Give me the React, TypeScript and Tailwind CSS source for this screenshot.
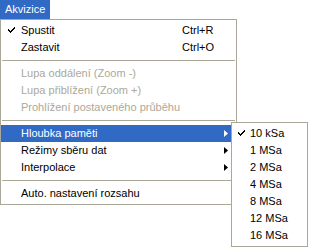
import React from 'react';

const BORDER = 'border-[#aca899]';

const Check = ({ color = '#000' }: { color?: string }) => (
  <svg width="7" height="7" viewBox="0 0 7 7" className="block">
    <path d="M0 2h1v1h1v1h1V3h1V2h1V1h1V0h1v2H6v1H5v1H4v1H3v1H2V5H1V4H0z" fill={color} />
  </svg>
);

const Arrow = ({ color = '#000' }: { color?: string }) => (
  <svg width="4" height="7" viewBox="0 0 4 7" className="block">
    <path d="M0 0L4 3.5L0 7z" fill={color} />
  </svg>
);

type Item =
  | { sep: true }
  | { sep?: false; label: string; shortcut?: string; checked?: boolean; disabled?: boolean; sub?: boolean; active?: boolean };

const mainItems: Item[] = [
  { label: 'Spustit', shortcut: 'Ctrl+R', checked: true },
  { label: 'Zastavit', shortcut: 'Ctrl+O' },
  { sep: true },
  { label: 'Lupa oddálení (Zoom -)', disabled: true },
  { label: 'Lupa přiblížení (Zoom +)', disabled: true },
  { label: 'Prohlížení postaveného průběhu', disabled: true },
  { sep: true },
  { label: 'Hloubka paměti', sub: true, active: true },
  { label: 'Režimy sběru dat', sub: true },
  { label: 'Interpolace', sub: true },
  { sep: true },
  { label: 'Auto. nastavení rozsahu' },
];

const depths = ['10 kSa', '1 MSa', '2 MSa', '4 MSa', '8 MSa', '12 MSa', '16 MSa'];

function MenuRow({ item }: { item: Item }) {
  if (item.sep) {
    return (
      <div className="h-[9px] flex items-center px-px">
        <div className="h-px w-full bg-[#aca899]" />
      </div>
    );
  }
  const fg = item.active ? 'text-white' : item.disabled ? 'text-[#aca899]' : 'text-black';
  return (
    <div className={`h-[17px] flex items-center ${item.active ? 'bg-[#316ac5]' : ''} ${fg}`}>
      <div className="w-[20px] flex justify-center pl-[1px]">
        {item.checked && <Check color={item.active ? '#fff' : '#000'} />}
      </div>
      <span className="flex-1 whitespace-nowrap">{item.label}</span>
      {item.shortcut && <span className="w-[40px] whitespace-nowrap">{item.shortcut}</span>}
      <div className="w-[14px] flex justify-start pl-[2px]">
        {item.sub && <Arrow color={item.active ? '#fff' : '#000'} />}
      </div>
    </div>
  );
}

export default function App() {
  return (
    <div
      className="relative w-[310px] h-[247px] bg-white overflow-hidden text-[11px] leading-none"
      style={{ fontFamily: 'Tahoma, "Liberation Sans", Arial, sans-serif' }}
    >
      <div className="flex">
        <div className="h-[19px] px-[5px] flex items-center bg-[#316ac5] text-white">Akvizice</div>
      </div>

      <div className={`w-[237px] border ${BORDER} bg-white py-[2px]`}>
        {mainItems.map((it, i) => (
          <MenuRow key={i} item={it} />
        ))}
      </div>

      {/* submenu */}
      <div className={`absolute left-[231px] top-[122px] w-[77px] border ${BORDER} bg-white py-[2px]`}>
        {depths.map((d, i) => (
          <div key={d} className="h-[17px] flex items-center text-black">
            <div className="w-[18px] flex justify-center pl-[1px]">{i === 0 && <Check />}</div>
            <span className="whitespace-nowrap">{d}</span>
          </div>
        ))}
      </div>
    </div>
  );
}
